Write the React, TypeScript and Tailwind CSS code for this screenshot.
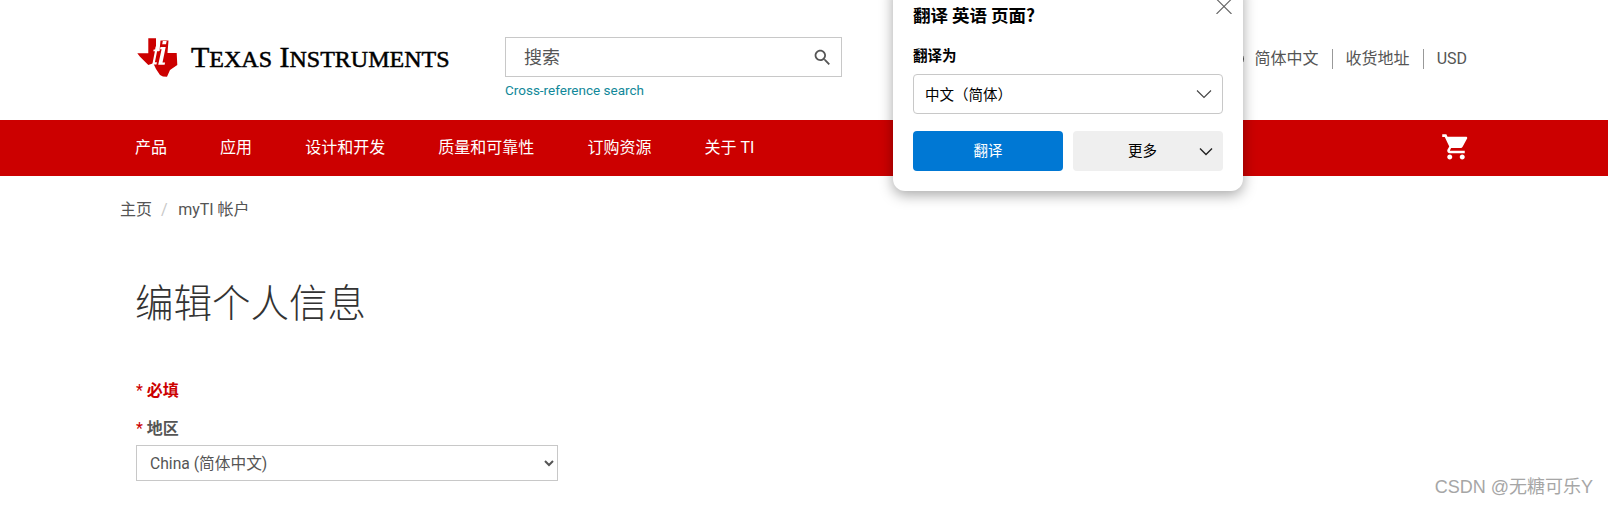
import React from "react";

const sans = "font-['Roboto','Noto_Sans_CJK_SC',sans-serif]";

function Logo() {
  return (
    <svg width="42" height="42" viewBox="0 0 42 42" className="shrink-0">
      <path
        d="M11.3 1.3H19V14H22.5L23.5 3.5H31.5L30.5 16H39.7L40.3 28L33 33L30 39.7L26 39.5L23 38L19 32L16.3 26.3L11.3 28L3 19.7L.3 16.3H11.3Z"
        fill="#cc0000"
      />
      <path d="M25.8 4h3.8l-.6 3.2h-3.8z" fill="#ffffff" />
      <path d="M23.5 10h5.2l-3.2 15.5h2.6l-.5 2.2h-6.4l3.4-15.5h-1.6z" fill="#ffffff" />
      <path d="M18.6 9.5h2.4l-.5 3h2l-.4 1.8h-2l-2.2 11h2l-.4 2.2h-4.2l2.6-13.2h-1.6l.4-1.8h1.4z" fill="#ffffff" />
    </svg>
  );
}

function Search() {
  return (
    <svg width="21" height="21" viewBox="0 0 24 24" fill="#555555">
      <path d="M15.5 14h-.79l-.28-.27C15.41 12.59 16 11.11 16 9.5 16 5.91 13.09 3 9.5 3S3 5.91 3 9.5 5.91 16 9.5 16c1.61 0 3.09-.59 4.23-1.57l.27.28v.79l5 4.99L20.49 19l-4.99-5zm-6 0C7.01 14 5 11.99 5 9.5S7.01 5 9.5 5 14 7.01 14 9.5 11.99 14 9.5 14z" />
    </svg>
  );
}

function Cart() {
  return (
    <svg width="30" height="30" viewBox="0 0 24 24" fill="#ffffff" className="-mt-[3px]">
      <path d="M7 18c-1.1 0-1.99.9-1.99 2S5.9 22 7 22s2-.9 2-2-.9-2-2-2zM1 2v2h2l3.6 7.59-1.35 2.45c-.16.28-.25.61-.25.96 0 1.1.9 2 2 2h12v-2H7.42c-.14 0-.25-.11-.25-.25l.03-.12.9-1.83h7.45c.75 0 1.41-.41 1.75-1.03l3.58-6.49c.08-.14.12-.31.12-.48 0-.55-.45-1-1-1H5.21l-.94-2H1zm16 16c-1.1 0-1.99.9-1.99 2s.89 2 1.99 2 2-.9 2-2-.9-2-2-2z" />
    </svg>
  );
}

function Chevron({ color }: { color: string }) {
  return (
    <svg width="16" height="10" viewBox="0 0 16 10" fill="none" stroke={color} strokeWidth="1.1">
      <path d="M1 1.5l7 7 7-7" />
    </svg>
  );
}

function Popup() {
  return (
    <div className="absolute left-[893px] top-[-20px] w-[350px] h-[211px] bg-white rounded-[12px] shadow-[0_4px_14px_rgba(0,0,0,0.35)] px-[20px] pt-[24px] font-['Noto_Sans_CJK_SC',sans-serif] text-black">
      <button className="absolute right-[11px] top-[20px] w-[16px] h-[14px] overflow-hidden">
        <svg width="16" height="16" viewBox="0 0 16 16" stroke="#666666" strokeWidth="1.1" className="block">
          <path d="M0.5 -1L15.5 14M15.5 -1L0.5 14" />
        </svg>
      </button>
      <h2 className="text-[17.5px] leading-[22px] font-bold">翻译 英语 页面?</h2>
      <div className="mt-[18px] text-[14.5px] leading-[22px] font-bold">翻译为</div>
      <div className="mt-[8px] h-[40px] border border-[#c8c8c8] rounded-[4px] flex items-center justify-between pl-[11px] pr-[10px] text-[14.5px]">
        <span>中文（简体）</span>
        <Chevron color="#444444" />
      </div>
      <div className="mt-[17px] flex gap-[10px]">
        <button className="w-[150px] h-[40px] bg-[#0078d4] rounded-[4px] text-white text-[14.5px] pb-[3px]">翻译</button>
        <button className="w-[150px] h-[40px] bg-[#efefef] rounded-[4px] text-[14.5px] flex items-center justify-between pl-[55px] pr-[10px]">
          <span className="-mt-[3px]">更多</span>
          <svg width="14" height="9" viewBox="0 0 14 9" fill="none" stroke="#222222" strokeWidth="1.4">
            <path d="M1 1.5l6 6 6-6" />
          </svg>
        </button>
      </div>
    </div>
  );
}

const navItems = ["产品", "应用", "设计和开发", "质量和可靠性", "订购资源", "关于 TI"];

export default function App() {
  return (
    <div className={`relative w-[1608px] h-[506px] overflow-hidden bg-white ${sans}`}>
      <header className="h-[120px] flex items-start pl-[137px] pr-[141px]">
        <div className="w-[368px] flex items-center pt-[37px] gap-[12px]">
          <Logo />
          <span className="-mt-[1px] font-['Liberation_Serif',serif] text-[30px] leading-[30px] [-webkit-text-stroke:0.5px_#000000] text-black whitespace-nowrap">
            T<span className="text-[24px]">EXAS</span> I<span className="text-[24px]">NSTRUMENTS</span>
          </span>
        </div>
        <div className="pt-[37px] w-[337px]">
          <div className="h-[40px] border border-[#c8c8c8] flex items-center justify-between pl-[18px] pr-[8px]">
            <span className="text-[18px] text-[#555555]">搜索</span>
            <Search />
          </div>
          <a className="block mt-[4px] text-[13.5px] leading-[18px] text-[#118899]">Cross-reference search</a>
        </div>
        <div className="ml-auto pt-[49px] flex items-center text-[16px] leading-[20px] text-[#555555]">
          <span className="w-[16px] h-[16px] rounded-full border-[1.5px] border-[#555555] mr-[11px]" />
          <span className="pr-[13px] border-r border-[#999999]">简体中文</span>
          <span className="px-[13px] border-r border-[#999999]">收货地址</span>
          <span className="pl-[13px]">USD</span>
        </div>
      </header>

      <nav className="h-[56px] bg-[#cc0000] flex items-center justify-between pl-[135px] pr-[137px] text-white text-[16px]">
        <div className="flex gap-[53.1px]">
          {navItems.map((n) => (
            <a key={n}>{n}</a>
          ))}
        </div>
        <Cart />
      </nav>

      <div className="pl-[120px] pt-[23px] flex items-center text-[16px] leading-[22px] text-[#555555]">
        <span>主页</span>
        <span className="mx-[9px] text-[#c8c8c8]">/</span>
        <span className="ml-[1.5px]">myTI 帐户</span>
      </div>

      <main className="pl-[136px]">
        <h1 className="-ml-[1px] mt-[56px] text-[38.5px] leading-[54px] font-light text-[#333333]">编辑个人信息</h1>
        <p className="mt-[49px] text-[16px] leading-[22px] font-bold text-[#cc0000]">
          <span className="font-normal">* </span>必填
        </p>
        <label className="block mt-[16px] text-[16px] leading-[22px] font-bold text-[#555555]">
          <span className="text-[#cc0000] font-normal">* </span>地区
        </label>
        <select className="block mt-[5px] w-[422px] h-[36px] border border-[#c8c8c8] pl-[9px] text-[15.7px] text-[#555555] bg-white">
          <option>China (简体中文)</option>
        </select>
      </main>

      <Popup />

      <div className="absolute right-[15px] top-[476px] font-['Liberation_Sans','Noto_Sans_CJK_SC',sans-serif] text-[18px] leading-[22px] text-[#a6a6a6]">
        CSDN @无糖可乐Y
      </div>
    </div>
  );
}
